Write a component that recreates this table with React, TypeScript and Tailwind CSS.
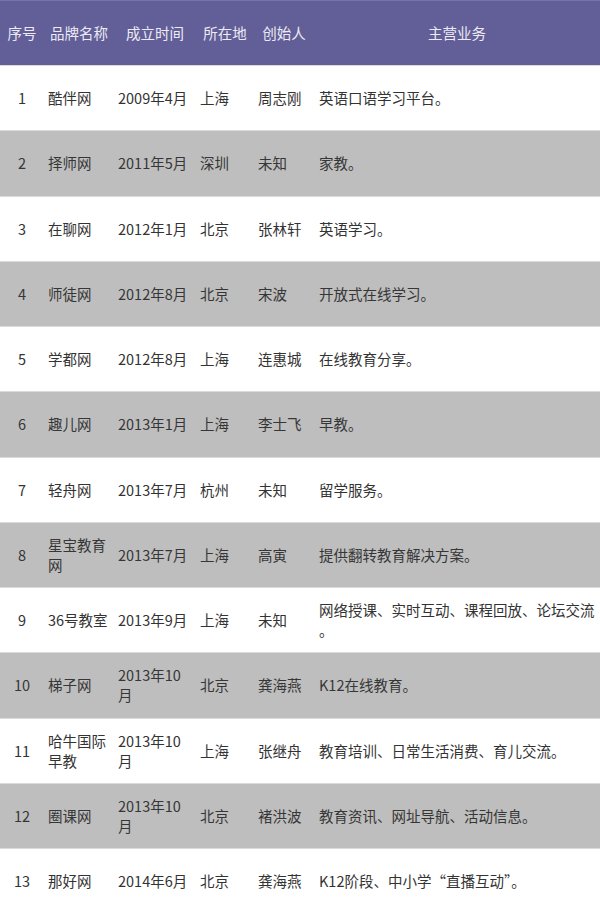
import React from "react";

type Row = { n: string; name: React.ReactNode; date: React.ReactNode; city: string; founder: string; biz: React.ReactNode };

const rows: Row[] = [
  { n: "1", name: "酷伴网", date: "2009年4月", city: "上海", founder: "周志刚", biz: "英语口语学习平台。" },
  { n: "2", name: "择师网", date: "2011年5月", city: "深圳", founder: "未知", biz: "家教。" },
  { n: "3", name: "在聊网", date: "2012年1月", city: "北京", founder: "张林轩", biz: "英语学习。" },
  { n: "4", name: "师徒网", date: "2012年8月", city: "北京", founder: "宋波", biz: "开放式在线学习。" },
  { n: "5", name: "学都网", date: "2012年8月", city: "上海", founder: "连惠城", biz: "在线教育分享。" },
  { n: "6", name: "趣儿网", date: "2013年1月", city: "上海", founder: "李士飞", biz: "早教。" },
  { n: "7", name: "轻舟网", date: "2013年7月", city: "杭州", founder: "未知", biz: "留学服务。" },
  { n: "8", name: "星宝教育网", date: "2013年7月", city: "上海", founder: "高寅", biz: "提供翻转教育解决方案。" },
  {
    n: "9",
    name: "36号教室",
    date: "2013年9月",
    city: "上海",
    founder: "未知",
    biz: (
      <>
        网络授课、实时互动、课程回放、论坛交流
        <br />。
      </>
    ),
  },
  { n: "10", name: "梯子网", date: "2013年10月", city: "北京", founder: "龚海燕", biz: "K12在线教育。" },
  { n: "11", name: "哈牛国际早教", date: "2013年10月", city: "上海", founder: "张继舟", biz: "教育培训、日常生活消费、育儿交流。" },
  { n: "12", name: "圈课网", date: "2013年10月", city: "北京", founder: "褚洪波", biz: "教育资讯、网址导航、活动信息。" },
  { n: "13", name: "那好网", date: "2014年6月", city: "北京", founder: "龚海燕", biz: "K12阶段、中小学“直播互动”。" },
];

const grid = "grid grid-cols-[44px_70px_82px_58px_60px_1fr]";

export default function App() {
  return (
    <div
      className="w-[600px] h-[913px] overflow-hidden bg-white text-[14.5px] leading-[20px] text-[#333]"
      style={{ fontFamily: '"Noto Sans CJK SC", "Noto Sans", sans-serif' }}
    >
      <div className={`${grid} h-[65px] items-center bg-[#625e97] border-t border-[#7673a8] text-[#eceaf4]`}>
        <div className="text-center">序号</div>
        <div className="text-center">品牌名称</div>
        <div className="text-center">成立时间</div>
        <div className="text-center">所在地</div>
        <div className="text-center">创始人</div>
        <div className="text-center">主营业务</div>
      </div>
      {rows.map((r, i) => (
        <div
          key={r.n}
          className={`${grid} h-[65.25px] items-center border-t border-[#dadada] ${i % 2 === 1 ? "bg-[#bebebe] text-[#363636]" : "bg-white"}`}
        >
          <div className="text-center">{r.n}</div>
          <div className="pl-1 pr-1">{r.name}</div>
          <div className="pl-1 pr-1">{r.date}</div>
          <div className="pl-1">{r.city}</div>
          <div className="pl-1">{r.founder}</div>
          <div className="pl-[5px]">{r.biz}</div>
        </div>
      ))}
    </div>
  );
}
